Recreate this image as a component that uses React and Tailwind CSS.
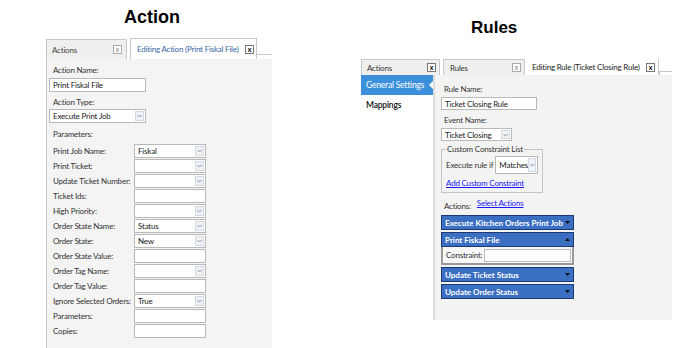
import React from 'react';

const ui = "font-['Lato','Open_Sans',sans-serif] whitespace-nowrap tracking-[-0.2px]";

function CloseBox({ active }) {
  return (
    <span
      className={`ml-auto flex h-[9px] w-[9px] shrink-0 items-center justify-center border bg-white text-[7px] leading-none tracking-normal ${
        active ? 'border-[#777] font-bold text-black' : 'border-[#aaa] text-[#777]'
      }`}
    >
      x
    </span>
  );
}

function Chevron() {
  return (
    <svg width="5" height="4" viewBox="0 0 5 4">
      <path d="M0.5 1 L2.5 3 L4.5 1" fill="none" stroke="#7b8794" strokeWidth="0.9" />
    </svg>
  );
}

function Select({ value, className }) {
  return (
    <div className={`flex border border-[#b9b9b9] bg-white ${className}`}>
      <span className="flex flex-1 items-center pl-[3px] text-[#222]">{value}</span>
      <span className="my-[1px] mr-[1px] flex w-[9px] items-center justify-center border border-[#d3dbe3] bg-[#eef2f6]">
        <Chevron />
      </span>
    </div>
  );
}

function Input({ value, className }) {
  return (
    <div className={`flex items-center border border-[#b9b9b9] bg-white pl-[3px] text-[#222] ${className}`}>
      {value}
    </div>
  );
}

const params = [
  ['Print Job Name:', 'select', 'Fiskal'],
  ['Print Ticket:', 'select', ''],
  ['Update Ticket Number:', 'select', ''],
  ['Ticket Ids:', 'input', ''],
  ['High Priority:', 'select', ''],
  ['Order State Name:', 'select', 'Status'],
  ['Order State:', 'select', 'New'],
  ['Order State Value:', 'input', ''],
  ['Order Tag Name:', 'select', ''],
  ['Order Tag Value:', 'input', ''],
  ['Ignore Selected Orders:', 'select', 'True'],
  ['Parameters:', 'input', ''],
  ['Copies:', 'input', ''],
];

function ActionPanel() {
  return (
    <div className="ml-[46px] flex w-[226px] flex-col">
      <div className="h-[38px] pl-[78px] pt-[6px] font-['Liberation_Sans',Arial,sans-serif] text-[18px] font-bold leading-[22px] tracking-normal text-black">
        Action
      </div>
      <div className="flex h-[21px] items-stretch text-[8px]">
        <div className="mt-[1px] flex w-[81px] items-center border border-b-0 border-[#c8c8c8] bg-[#efefef] pl-[5px] pr-[4px] text-[#444]">
          Actions
          <CloseBox />
        </div>
        <div className="ml-[3px] flex w-[127px] items-center border border-b-0 border-[#c8c8c8] bg-white pl-[6px] pr-[2px] text-[#3a68a8]">
          Editing Action (Print Fiskal File)
          <CloseBox active />
        </div>
        <div className="mt-[16px] flex-1 border-t border-[#c8c8c8]" />
      </div>
      <div className="flex h-[289px] flex-col border-l border-[#c8c8c8] bg-[#f4f4f4] pl-[2px] text-[8px] text-[#333]">
        <div className="mt-[5px] pl-[4px] leading-[12px]">Action Name:</div>
        <Input value="Print Fiskal File" className="mt-[2px] h-[14px] w-[97px]" />
        <div className="mt-[4px] pl-[4px] leading-[12px]">Action Type:</div>
        <Select value="Execute Print Job" className="mt-[1px] h-[14px] w-[97px]" />
        <div className="mt-[5px] pl-[4px] leading-[12px]">Parameters:</div>
        <div className="mt-[3px] flex flex-col">
          {params.map(([label, kind, value]) => (
            <div key={label} className="flex h-[15px] items-center">
              <span className="w-[85px] pl-[4px] leading-[12px]">{label}</span>
              {kind === 'select' ? (
                <Select value={value} className="h-[14px] w-[72px]" />
              ) : (
                <Input value={value} className="h-[14px] w-[72px]" />
              )}
            </div>
          ))}
        </div>
      </div>
    </div>
  );
}

function Bar({ title, up }) {
  return (
    <div className="flex h-[15px] items-center border border-[#1b3a73] bg-[#3a6fc2] pl-[3px] pr-[3px] text-[8px] font-bold tracking-normal text-white">
      {title}
      <svg className="ml-auto shrink-0" width="5" height="3" viewBox="0 0 5 3">
        <path d={up ? 'M0 3 L2.5 0 L5 3 Z' : 'M0 0 L2.5 3 L5 0 Z'} fill="#111" />
      </svg>
    </div>
  );
}

function RulesPanel() {
  return (
    <div className="ml-[88px] flex w-[312px] flex-col">
      <div className="h-[59px] pl-[111px] pt-[17px] font-['Liberation_Sans',Arial,sans-serif] text-[17px] font-bold leading-[22px] tracking-normal text-black">
        Rules
      </div>
      <div className="flex h-[16px] items-stretch text-[8px]">
        <div className="ml-[1px] flex w-[79px] items-center border border-b-0 border-[#c8c8c8] bg-[#efefef] pl-[5px] pr-[3px] text-[#333]">
          Actions
          <CloseBox active />
        </div>
        <div className="ml-[3px] flex w-[82px] items-center border border-b-0 border-[#c8c8c8] bg-[#efefef] pl-[6px] pr-[3px] text-[#333]">
          Rules
          <CloseBox />
        </div>
        <div className="flex w-[134px] items-center border-r border-[#c8c8c8] bg-white pl-[7px] pr-[3px] text-[#222]">
          Editing Rule (Ticket Closing Rule)
          <CloseBox active />
        </div>
        <div className="mt-[12px] flex-1 border-t border-l border-[#c8c8c8]" />
      </div>
      <div className="flex h-[245px]">
        <div className="w-[73px] bg-white pl-[1px] text-[8.5px]">
          <div className="relative flex h-[20px] items-center bg-[#3b8fdb] pl-[5px] text-white">
            General Settings
            <span className="absolute right-0 top-[6px] h-0 w-0 border-y-[4px] border-r-[4px] border-y-transparent border-r-white" />
          </div>
          <div className="mt-[4px] pl-[5px] font-semibold leading-[12px] text-[#111]">Mappings</div>
        </div>
        <div className="flex flex-1 flex-col border-l-2 border-[#dcdcdc] bg-[#f3f3f3] pl-[6px] text-[8px] text-[#333]">
          <div className="mt-[8px] pl-[3px] leading-[12px]">Rule Name:</div>
          <Input value="Ticket Closing Rule" className="mt-[2px] h-[13px] w-[96px]" />
          <div className="mt-[4px] pl-[3px] leading-[12px]">Event Name:</div>
          <Select value="Ticket Closing" className="mt-[2px] h-[13px] w-[71px]" />
          <fieldset className="mt-[2px] w-[99px] border border-[#c4c4c4] px-[4px] pb-[3px]">
            <legend className="px-[1px] leading-[12px]">Custom Constraint List</legend>
            <div className="mt-[1px] flex items-center">
              <span>Execute rule if</span>
              <Select value="Matches" className="ml-[2px] h-[18px] w-[43px]" />
            </div>
            <div className="mt-[3px] leading-[12px] text-[#1a1aff] underline">Add Custom Constraint</div>
          </fieldset>
          <div className="mt-[6px] flex items-start pl-[3px]">
            <span className="mt-[1px] leading-[12px]">Actions:</span>
            <span className="ml-[6px] mt-[-2px] leading-[12px] text-[#1a1aff] underline">Select Actions</span>
          </div>
          <div className="mt-[3px] flex w-[133px] flex-col gap-[2px]">
            <Bar title="Execute Kitchen Orders Print Job" />
            <div className="flex flex-col">
              <Bar title="Print Fiskal File" up />
              <div className="flex h-[18px] items-center border-x-2 border-b-2 border-[#9a9a9a] bg-[#f7f7f7] pl-[3px] pr-[1px]">
                <span>Constraint:</span>
                <div className="ml-[2px] h-[13px] flex-1 border border-[#bdbdbd] bg-white" />
              </div>
            </div>
            <Bar title="Update Ticket Status" />
            <Bar title="Update Order Status" />
          </div>
        </div>
      </div>
    </div>
  );
}

export default function App() {
  return (
    <div className={`flex h-[348px] w-[690px] overflow-hidden bg-white ${ui}`}>
      <ActionPanel />
      <RulesPanel />
    </div>
  );
}
